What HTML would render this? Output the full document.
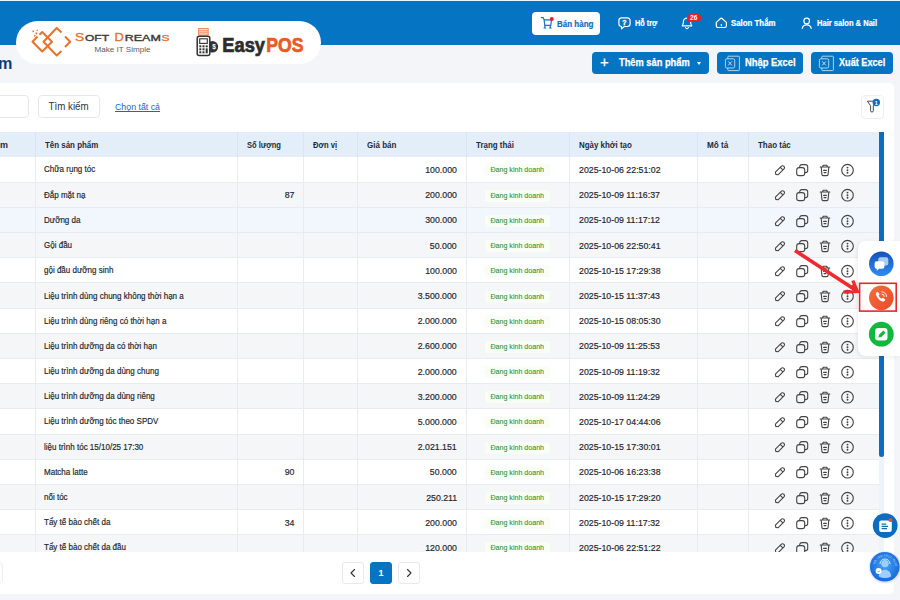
<!DOCTYPE html>
<html lang="vi"><head><meta charset="utf-8"><title>EasyPOS - Sản phẩm</title>
<style>
*{box-sizing:border-box;margin:0;padding:0}
html,body{width:900px;height:600px;overflow:hidden}
body{position:relative;background:#f3f5f8;font-family:"Liberation Sans",sans-serif;color:#2b2f36;font-size:9px}
.abs{position:absolute}
#topstrip{left:0;top:0;width:900px;height:2px;background:linear-gradient(#e6f8fd 0,#e6f8fd 1.2px,#2468ac 1.3px,#0574c3 2px)}
#hdr{left:0;top:2px;width:900px;height:43px;background:#0574c3;box-shadow:0 1px 0 #f9fbfd}
#logo{left:16px;top:21px;width:305px;height:43px;border-radius:22px;background:#fff}
#title{left:-2px;top:54px;font-size:16.200px;font-weight:bold;color:#0c3c74;letter-spacing:-0.2px}
.hbtn{color:#fff;font-weight:bold;font-size:8.6px;white-space:nowrap;-webkit-text-stroke:.2px #fff}
#banhang{-webkit-text-stroke:.2px #1a72c2;left:532.300px;top:12px;width:68px;height:22.600px;border-radius:4px;background:#fff;color:#0e6cc0}
.bbtn{top:52px;height:22px;border-radius:4px;background:#0574c3;color:#fff;font-weight:bold;font-size:10px;white-space:nowrap;-webkit-text-stroke:.25px #fff}
#panel{left:-6px;top:83px;width:900px;height:511px;background:#fff;border-radius:5px}
#inp{left:-6px;top:95px;width:35px;height:23px;border:1px solid #e4e8ee;border-radius:4px;background:#fff}
#search{left:38px;top:95px;width:62px;height:23px;border:1px solid #e4e8ee;border-radius:4px;background:#fff;font-size:10px;color:#30343a;text-align:center;line-height:21px}
#chon{left:115px;top:102px;font-size:8.8px;color:#1769bd;text-decoration:underline;white-space:nowrap}
#filter{left:860.500px;top:95px;width:23.500px;height:23.500px;border:1px solid #eceef2;border-radius:4px;background:#fff}
#twrap{left:0;top:132px;width:879px;height:419.500px;overflow:hidden}
table{border-collapse:collapse;table-layout:fixed;width:879px}
th{height:25px;background:#e3eef8;color:#1d2b3c;font-weight:bold;font-size:9px;text-align:left;padding-left:9px;border-right:1px solid #d9e5f1;white-space:nowrap;overflow:hidden}
td{height:25.2px;border-right:1px solid #e8ebef;border-bottom:1px solid #e8ebef;font-size:9px;white-space:nowrap;overflow:hidden;padding:0;color:#22262c;-webkit-text-stroke:.18px #22262c}
td span{display:inline-block}
tr.r0 td{background:#fff}
tr.r1 td{background:#f5f6f7}
tr.hl td{background:#f2f7fd}
td.nm{padding-left:8.500px}
td.nm span{transform:scaleX(.89);transform-origin:0 50%}
td.num{text-align:right;padding-right:8.500px;font-size:9.400px}
td.num span{transform:scaleX(.935);transform-origin:100% 50%}
td.dt{padding-left:9.500px;font-size:9.400px}
td.dt span{transform:scaleX(.937);transform-origin:0 50%}
td.st{text-align:center}
td.st span{background:#f8fdf6;color:#2a963c;font-size:8px;width:65px;height:12px;line-height:12px;border-radius:2px;position:relative;top:1px;-webkit-text-stroke:.1px #2a963c}
td.st i{display:inline-block;font-style:normal;transform:scaleX(.885);transform-origin:50% 50%}
td.act{padding-left:25px;border-right:none}
svg.ic{display:block;position:relative;top:.6px}
#sbtrack{left:879px;top:132px;width:5px;height:419px;background:#edf3fa}
#sbthumb{left:879px;top:132px;width:5px;height:325px;background:#0e6cc0;border-radius:0 0 3px 3px}
#float{left:858px;top:241px;width:42px;height:115px;background:#fff;border-radius:8px 0 0 8px;box-shadow:-1px 1px 4px rgba(0,0,0,.08)}
.pg{top:562px;width:22px;height:22px;border:1px solid #e6e9ee;border-radius:3px;background:#fff}
#pg1{left:370px;background:#0574c3;border-color:#0574c3;color:#fff;font-weight:bold;font-size:9px;text-align:center;line-height:20px}
#botstrip{left:0;top:593.500px;width:900px;height:6px;background:#f3f5f8}
#pgsize{left:-7px;top:561.500px;width:10px;height:22.500px;border:1px solid #eceef2;border-radius:4px;background:#fff}
</style></head><body>
<div class="abs" id="topstrip"></div>
<div class="abs" id="hdr"></div>

<div class="abs" id="title">m</div>

<!-- top nav -->
<div class="abs hbtn" id="banhang"><span class="abs" style="left:24.500px;top:6.500px"><span style="display:inline-block;transform:scaleX(0.930);transform-origin:0 50%">Bán hàng</span></span>
<svg class="abs" style="left:8px;top:4px" width="16" height="14" viewBox="540 16 16 14"><g fill="none" stroke="#1a72c2" stroke-width="1.200" stroke-linecap="round" stroke-linejoin="round"><path d="M541.400 17.600h1.700l1 2.200h7.400l-.7 5.600h-6l-.7-5.600"/><path d="M544.900 25.600v2.300M550.300 25.600v2.300M544 28h1.800M549.400 28h1.800"/></g><circle cx="551.800" cy="19" r="2" fill="#e5202b"/></svg></div>

<svg class="abs" style="left:616px;top:15px" width="16" height="16" viewBox="616 15 16 16"><path d="M621.600 17.900h5.800a2.700 2.700 0 0 1 2.700 2.700v3.200a2.700 2.700 0 0 1-2.700 2.700h-3l-2.900 2.300v-2.300a2.700 2.700 0 0 1-2.600-2.700v-3.200a2.700 2.700 0 0 1 2.700-2.700z" fill="none" stroke="#fff" stroke-width="1.200" stroke-linejoin="round"/><text x="624.500" y="24.900" font-family="Liberation Sans,sans-serif" font-size="7" font-weight="bold" fill="#fff" stroke="#fff" stroke-width=".3" text-anchor="middle">?</text></svg>
<div class="abs hbtn" style="left:635px;top:18px"><span style="display:inline-block;transform:scaleX(0.852);transform-origin:0 50%">Hỗ trợ</span></div>

<svg class="abs" style="left:679px;top:14px" width="16" height="18" viewBox="0 0 16 18"><g fill="none" stroke="#fff" stroke-width="1.200" stroke-linecap="round" stroke-linejoin="round"><path d="M3.200 11.800c1-1 1.200-2.200 1.200-4a3.600 3.600 0 0 1 7.200 0c0 1.800.2 3 1.200 4z"/><path d="M6.600 13.600a1.500 1.500 0 0 0 2.800 0"/></g></svg>
<div class="abs" style="left:686.700px;top:14px;width:14px;height:8px;border-radius:4px;background:#e5202b;color:#fff;font-size:6.500px;font-weight:bold;text-align:center;line-height:8px">26</div>

<svg class="abs" style="left:714px;top:15px" width="16" height="16" viewBox="714 15 16 16"><g fill="none" stroke="#fff" stroke-width="1.200" stroke-linejoin="round" stroke-linecap="round"><path d="M716.300 22.400l4.300-3.900a1.100 1.100 0 0 1 1.500 0l4.300 3.900v3.400a1.700 1.700 0 0 1-1.700 1.700h-6.700a1.700 1.700 0 0 1-1.700-1.700z"/><path d="M721.350 24.600v1.100"/></g></svg>
<div class="abs hbtn" style="left:731px;top:18px"><span style="display:inline-block;transform:scaleX(0.913);transform-origin:0 50%">Salon Thắm</span></div>

<svg class="abs" style="left:798px;top:15px" width="16" height="16" viewBox="798 15 16 16"><g fill="none" stroke="#fff" stroke-width="1.200" stroke-linecap="round"><circle cx="806.700" cy="21" r="2.800"/><path d="M802.200 28.400c.5-2.400 2.200-3.500 4.500-3.500s4 1.100 4.500 3.500"/></g></svg>
<div class="abs hbtn" style="left:817px;top:18px"><span style="display:inline-block;transform:scaleX(0.879);transform-origin:0 50%">Hair salon &amp; Nail</span></div>

<!-- logo pill -->
<div class="abs" id="logo"></div>
<svg class="abs" style="left:16px;top:21px" width="305" height="43" viewBox="16 21 305 43">
<g fill="none" stroke="#e8722c" stroke-width="2" stroke-linejoin="round" stroke-linecap="butt">
<path d="M37.500 36.500L32.500 41.700 42.200 51.500 52 41.700 42.200 32 39.500 34.700"/>
<path d="M61.500 32.500L56.700 28 43.500 41.700 56.700 55.500 61.500 51"/>
<path d="M65 36.500L70.200 41.700 65 47"/>
</g>
<g fill="#e8722c"><rect x="32.500" y="30.500" width="1.600" height="1.600"/><rect x="35.500" y="32.500" width="1.800" height="1.800"/><rect x="36.500" y="29.800" width="1.300" height="1.300"/><rect x="34" y="35" width="1.500" height="1.500"/></g>
<g font-family="Liberation Sans,sans-serif" lengthAdjust="spacingAndGlyphs">
<text x="75" y="41" font-size="11.200" fill="#e8722c" stroke="#e8722c" stroke-width=".35" textLength="9.200" lengthAdjust="spacingAndGlyphs">S</text>
<text x="85" y="41" font-size="8.400" fill="#3a3a3a" stroke="#3a3a3a" stroke-width=".35" textLength="24" lengthAdjust="spacingAndGlyphs">OFT</text>
<text x="114.500" y="41" font-size="11.200" fill="#e8722c" stroke="#e8722c" stroke-width=".35" textLength="9.300" lengthAdjust="spacingAndGlyphs">D</text>
<text x="124.800" y="41" font-size="8.400" fill="#3a3a3a" stroke="#3a3a3a" stroke-width=".35" textLength="36" lengthAdjust="spacingAndGlyphs">REAM</text>
<text x="161.600" y="41" font-size="8.400" fill="#e8722c" stroke="#e8722c" stroke-width=".35" textLength="8" lengthAdjust="spacingAndGlyphs">S</text>
<text x="94.500" y="52.200" font-size="7.800" fill="#5a5a5a" textLength="56" lengthAdjust="spacingAndGlyphs">Make IT Simple</text>
<text x="222.300" y="51.500" font-size="20.300" font-weight="bold" fill="#2d2d2d" stroke="#2d2d2d" stroke-width=".7" textLength="42.700" lengthAdjust="spacingAndGlyphs">Easy</text>
<text x="266.300" y="51.500" font-size="20.300" font-weight="bold" fill="#ea5a24" stroke="#ea5a24" stroke-width=".7" textLength="37.200" lengthAdjust="spacingAndGlyphs">POS</text>
</g>
<!-- pos machine -->
<rect x="198.600" y="28.500" width="9.600" height="6.500" fill="#fbe3d6" stroke="#ee8a5c" stroke-width="1"/>
<path d="M198.600 30.800h9.600M198.600 32.800h9.600" stroke="#ee8a5c" stroke-width="1"/>
<circle cx="212.400" cy="46.800" r="5.800" fill="#333"/>
<text x="212.300" y="49.200" font-family="Liberation Sans,sans-serif" font-size="6.500" font-weight="bold" fill="#fff">$</text>
<rect x="197.200" y="36.300" width="12.600" height="19.200" rx="2" fill="#fff" stroke="#333" stroke-width="1.500"/>
<rect x="199.700" y="38.800" width="7.600" height="4.600" fill="#fff" stroke="#333" stroke-width="1.100"/>
<g fill="#333"><rect x="199.300" y="45.300" width="2" height="2"/><rect x="202.500" y="45.300" width="2" height="2"/><rect x="205.700" y="45.300" width="2" height="2"/><rect x="199.300" y="48.300" width="2" height="2"/><rect x="202.500" y="48.300" width="2" height="2"/><rect x="205.700" y="48.300" width="2" height="5"/><rect x="199.300" y="51.300" width="2" height="2"/><rect x="202.500" y="51.300" width="2" height="2"/></g>
</svg>

<!-- action buttons -->
<div class="abs bbtn" style="left:592px;width:117px"><span class="abs" style="left:8px;top:1px;font-size:15px;font-weight:normal">+</span><span class="abs" style="left:27.300px;top:5.200px"><span style="display:inline-block;transform:scaleX(0.929);transform-origin:0 50%">Thêm sản phẩm</span></span><span class="abs" style="left:105px;top:10px;width:0;height:0;border-left:2.500px solid transparent;border-right:2.500px solid transparent;border-top:3px solid #fff"></span></div>
<div class="abs bbtn" style="left:717px;width:86px"><svg class="abs" style="left:7px;top:3px" width="17" height="17" viewBox="7 3 17 17"><g fill="none" stroke="#c4def3" stroke-width=".9" stroke-linejoin="round"><rect x="10.800" y="4.200" width="11.600" height="14.400" rx=".8"/><rect x="8.400" y="6.800" width="9.300" height="9.200" rx="1.400" fill="#0574c3"/><path d="M11.200 9.400l3.700 4M14.900 9.400l-3.700 4" stroke-width="1"/></g></svg><span class="abs" style="left:28px;top:5.200px"><span style="display:inline-block;transform:scaleX(0.937);transform-origin:0 50%">Nhập Excel</span></span></div>
<div class="abs bbtn" style="left:811px;width:82px"><svg class="abs" style="left:7px;top:3px" width="17" height="17" viewBox="7 3 17 17"><g fill="none" stroke="#c4def3" stroke-width=".9" stroke-linejoin="round"><rect x="10.800" y="4.200" width="11.600" height="14.400" rx=".8"/><rect x="8.400" y="6.800" width="9.300" height="9.200" rx="1.400" fill="#0574c3"/><path d="M11.200 9.400l3.700 4M14.900 9.400l-3.700 4" stroke-width="1"/></g></svg><span class="abs" style="left:28.300px;top:5.200px"><span style="display:inline-block;transform:scaleX(0.913);transform-origin:0 50%">Xuất Excel</span></span></div>

<!-- panel -->
<div class="abs" id="panel"></div>
<div class="abs" id="inp"></div>
<div class="abs" id="search"><span style="display:inline-block;transform:scaleX(0.973);transform-origin:50% 50%">Tìm kiếm</span></div>
<div class="abs" id="chon">Chọn tất cả</div>
<div class="abs" id="filter"></div>
<svg class="abs" style="left:860px;top:94px" width="26" height="26" viewBox="860 94 26 26"><path d="M867.400 101.200L875.600 101.200 873.300 105.800 873.300 110.800Q873.300 112 872 112 870.600 112 870.600 110.800L870.600 105.800Z" fill="#fff" stroke="#4a4a4a" stroke-width="1" stroke-linejoin="round"/><circle cx="876.300" cy="102.500" r="3.700" fill="#0e6cc0"/><text x="876.300" y="104.500" font-family="Liberation Sans,sans-serif" font-size="5.500" font-weight="bold" fill="#fff" text-anchor="middle">1</text></svg>

<div class="abs" id="twrap"><table>
<colgroup><col style="width:35px"><col style="width:202px"><col style="width:66px"><col style="width:54px"><col style="width:109px"><col style="width:103px"><col style="width:128px"><col style="width:51px"><col style="width:131px"></colgroup>
<thead><tr><th style="padding-left:0;text-align:right;padding-right:28px">m</th><th><span style="display:inline-block;transform:scaleX(0.881);transform-origin:0 50%">Tên sản phẩm</span></th><th><span style="display:inline-block;transform:scaleX(0.839);transform-origin:0 50%">Số lượng</span></th><th><span style="display:inline-block;transform:scaleX(0.845);transform-origin:0 50%">Đơn vị</span></th><th><span style="display:inline-block;transform:scaleX(0.890);transform-origin:0 50%">Giá bán</span></th><th><span style="display:inline-block;transform:scaleX(0.883);transform-origin:0 50%">Trạng thái</span></th><th><span style="display:inline-block;transform:scaleX(0.881);transform-origin:0 50%">Ngày khởi tạo</span></th><th><span style="display:inline-block;transform:scaleX(0.906);transform-origin:0 50%">Mô tả</span></th><th style="border-right:none"><span style="display:inline-block;transform:scaleX(0.886);transform-origin:0 50%">Thao tác</span></th></tr></thead>
<tbody>
<tr class="r0"><td></td><td class="nm"><span>Chữa rụng tóc</span></td><td class="num"><span></span></td><td></td><td class="num"><span>100.000</span></td><td class="st"><span><i>Đang kinh doanh</i></span></td><td class="dt"><span>2025-10-06 22:51:02</span></td><td></td><td class="act"><svg class="ic" viewBox="0 0 80 14" width="80" height="14"><g fill="none" stroke="#444" stroke-width="1.1" stroke-linecap="round" stroke-linejoin="round"><path transform="translate(-0.8,0)" d="M2.6 11.4 L2.2 9.2 L8.2 3.2 a1.6 1.6 0 0 1 2.3 0 l0.3 0.3 a1.6 1.6 0 0 1 0 2.3 L4.8 11.8 Z M7.2 4.4 l2.4 2.4"/><rect transform="translate(0.7,0)" x="22" y="4.6" width="8" height="8" rx="2.4"/><path transform="translate(0.7,0)" d="M25 4.6 v-0.8 a2.2 2.2 0 0 1 2.2 -2.2 h3.6 a2.2 2.2 0 0 1 2.2 2.2 v3.6 a2.2 2.2 0 0 1 -2.2 2.2 h-0.8"/><path d="M46.2 4 h9.600 M48.600 3.800 l0.600 -1.600 h3.600 l0.600 1.600 M47.200 4.200 l0.700 7.200 a1.300 1.300 0 0 0 1.300 1.200 h3.600 a1.300 1.300 0 0 0 1.300 -1.200 l0.700 -7.200 M49.600 7.400 h2.800 M50 9.600 h2"/><circle cx="73.500" cy="7.200" r="5.800"/></g><g fill="#444"><circle cx="73.500" cy="4.600" r="0.950"/><circle cx="73.500" cy="7.200" r="0.950"/><circle cx="73.500" cy="9.800" r="0.950"/></g></svg></td></tr>
<tr class="r1"><td></td><td class="nm"><span>Đắp mặt nạ</span></td><td class="num"><span>87</span></td><td></td><td class="num"><span>200.000</span></td><td class="st"><span><i>Đang kinh doanh</i></span></td><td class="dt"><span>2025-10-09 11:16:37</span></td><td></td><td class="act"><svg class="ic" viewBox="0 0 80 14" width="80" height="14"><g fill="none" stroke="#444" stroke-width="1.1" stroke-linecap="round" stroke-linejoin="round"><path transform="translate(-0.8,0)" d="M2.6 11.4 L2.2 9.2 L8.2 3.2 a1.6 1.6 0 0 1 2.3 0 l0.3 0.3 a1.6 1.6 0 0 1 0 2.3 L4.8 11.8 Z M7.2 4.4 l2.4 2.4"/><rect transform="translate(0.7,0)" x="22" y="4.6" width="8" height="8" rx="2.4"/><path transform="translate(0.7,0)" d="M25 4.6 v-0.8 a2.2 2.2 0 0 1 2.2 -2.2 h3.6 a2.2 2.2 0 0 1 2.2 2.2 v3.6 a2.2 2.2 0 0 1 -2.2 2.2 h-0.8"/><path d="M46.2 4 h9.600 M48.600 3.800 l0.600 -1.600 h3.600 l0.600 1.600 M47.200 4.200 l0.700 7.200 a1.300 1.300 0 0 0 1.300 1.200 h3.600 a1.300 1.300 0 0 0 1.300 -1.200 l0.700 -7.200 M49.600 7.400 h2.800 M50 9.600 h2"/><circle cx="73.500" cy="7.200" r="5.800"/></g><g fill="#444"><circle cx="73.500" cy="4.600" r="0.950"/><circle cx="73.500" cy="7.200" r="0.950"/><circle cx="73.500" cy="9.800" r="0.950"/></g></svg></td></tr>
<tr class="r0 hl"><td></td><td class="nm"><span>Dưỡng da</span></td><td class="num"><span></span></td><td></td><td class="num"><span>300.000</span></td><td class="st"><span><i>Đang kinh doanh</i></span></td><td class="dt"><span>2025-10-09 11:17:12</span></td><td></td><td class="act"><svg class="ic" viewBox="0 0 80 14" width="80" height="14"><g fill="none" stroke="#444" stroke-width="1.1" stroke-linecap="round" stroke-linejoin="round"><path transform="translate(-0.8,0)" d="M2.6 11.4 L2.2 9.2 L8.2 3.2 a1.6 1.6 0 0 1 2.3 0 l0.3 0.3 a1.6 1.6 0 0 1 0 2.3 L4.8 11.8 Z M7.2 4.4 l2.4 2.4"/><rect transform="translate(0.7,0)" x="22" y="4.6" width="8" height="8" rx="2.4"/><path transform="translate(0.7,0)" d="M25 4.6 v-0.8 a2.2 2.2 0 0 1 2.2 -2.2 h3.6 a2.2 2.2 0 0 1 2.2 2.2 v3.6 a2.2 2.2 0 0 1 -2.2 2.2 h-0.8"/><path d="M46.2 4 h9.600 M48.600 3.800 l0.600 -1.600 h3.600 l0.600 1.600 M47.200 4.200 l0.700 7.200 a1.300 1.300 0 0 0 1.300 1.200 h3.600 a1.300 1.300 0 0 0 1.300 -1.200 l0.700 -7.200 M49.600 7.400 h2.800 M50 9.600 h2"/><circle cx="73.500" cy="7.200" r="5.800"/></g><g fill="#444"><circle cx="73.500" cy="4.600" r="0.950"/><circle cx="73.500" cy="7.200" r="0.950"/><circle cx="73.500" cy="9.800" r="0.950"/></g></svg></td></tr>
<tr class="r1"><td></td><td class="nm"><span>Gội đầu</span></td><td class="num"><span></span></td><td></td><td class="num"><span>50.000</span></td><td class="st"><span><i>Đang kinh doanh</i></span></td><td class="dt"><span>2025-10-06 22:50:41</span></td><td></td><td class="act"><svg class="ic" viewBox="0 0 80 14" width="80" height="14"><g fill="none" stroke="#444" stroke-width="1.1" stroke-linecap="round" stroke-linejoin="round"><path transform="translate(-0.8,0)" d="M2.6 11.4 L2.2 9.2 L8.2 3.2 a1.6 1.6 0 0 1 2.3 0 l0.3 0.3 a1.6 1.6 0 0 1 0 2.3 L4.8 11.8 Z M7.2 4.4 l2.4 2.4"/><rect transform="translate(0.7,0)" x="22" y="4.6" width="8" height="8" rx="2.4"/><path transform="translate(0.7,0)" d="M25 4.6 v-0.8 a2.2 2.2 0 0 1 2.2 -2.2 h3.6 a2.2 2.2 0 0 1 2.2 2.2 v3.6 a2.2 2.2 0 0 1 -2.2 2.2 h-0.8"/><path d="M46.2 4 h9.600 M48.600 3.800 l0.600 -1.600 h3.600 l0.600 1.600 M47.200 4.200 l0.700 7.200 a1.300 1.300 0 0 0 1.300 1.200 h3.600 a1.300 1.300 0 0 0 1.300 -1.200 l0.700 -7.200 M49.600 7.400 h2.800 M50 9.600 h2"/><circle cx="73.500" cy="7.200" r="5.800"/></g><g fill="#444"><circle cx="73.500" cy="4.600" r="0.950"/><circle cx="73.500" cy="7.200" r="0.950"/><circle cx="73.500" cy="9.800" r="0.950"/></g></svg></td></tr>
<tr class="r0"><td></td><td class="nm"><span>gội đầu dưỡng sinh</span></td><td class="num"><span></span></td><td></td><td class="num"><span>100.000</span></td><td class="st"><span><i>Đang kinh doanh</i></span></td><td class="dt"><span>2025-10-15 17:29:38</span></td><td></td><td class="act"><svg class="ic" viewBox="0 0 80 14" width="80" height="14"><g fill="none" stroke="#444" stroke-width="1.1" stroke-linecap="round" stroke-linejoin="round"><path transform="translate(-0.8,0)" d="M2.6 11.4 L2.2 9.2 L8.2 3.2 a1.6 1.6 0 0 1 2.3 0 l0.3 0.3 a1.6 1.6 0 0 1 0 2.3 L4.8 11.8 Z M7.2 4.4 l2.4 2.4"/><rect transform="translate(0.7,0)" x="22" y="4.6" width="8" height="8" rx="2.4"/><path transform="translate(0.7,0)" d="M25 4.6 v-0.8 a2.2 2.2 0 0 1 2.2 -2.2 h3.6 a2.2 2.2 0 0 1 2.2 2.2 v3.6 a2.2 2.2 0 0 1 -2.2 2.2 h-0.8"/><path d="M46.2 4 h9.600 M48.600 3.800 l0.600 -1.600 h3.600 l0.600 1.600 M47.200 4.200 l0.700 7.200 a1.300 1.300 0 0 0 1.300 1.200 h3.600 a1.300 1.300 0 0 0 1.300 -1.200 l0.700 -7.200 M49.600 7.400 h2.800 M50 9.600 h2"/><circle cx="73.500" cy="7.200" r="5.800"/></g><g fill="#444"><circle cx="73.500" cy="4.600" r="0.950"/><circle cx="73.500" cy="7.200" r="0.950"/><circle cx="73.500" cy="9.800" r="0.950"/></g></svg></td></tr>
<tr class="r1"><td></td><td class="nm"><span>Liệu trình dùng chung không thời hạn a</span></td><td class="num"><span></span></td><td></td><td class="num"><span>3.500.000</span></td><td class="st"><span><i>Đang kinh doanh</i></span></td><td class="dt"><span>2025-10-15 11:37:43</span></td><td></td><td class="act"><svg class="ic" viewBox="0 0 80 14" width="80" height="14"><g fill="none" stroke="#444" stroke-width="1.1" stroke-linecap="round" stroke-linejoin="round"><path transform="translate(-0.8,0)" d="M2.6 11.4 L2.2 9.2 L8.2 3.2 a1.6 1.6 0 0 1 2.3 0 l0.3 0.3 a1.6 1.6 0 0 1 0 2.3 L4.8 11.8 Z M7.2 4.4 l2.4 2.4"/><rect transform="translate(0.7,0)" x="22" y="4.6" width="8" height="8" rx="2.4"/><path transform="translate(0.7,0)" d="M25 4.6 v-0.8 a2.2 2.2 0 0 1 2.2 -2.2 h3.6 a2.2 2.2 0 0 1 2.2 2.2 v3.6 a2.2 2.2 0 0 1 -2.2 2.2 h-0.8"/><path d="M46.2 4 h9.600 M48.600 3.800 l0.600 -1.600 h3.600 l0.600 1.600 M47.200 4.200 l0.700 7.200 a1.300 1.300 0 0 0 1.300 1.200 h3.600 a1.300 1.300 0 0 0 1.300 -1.200 l0.700 -7.200 M49.600 7.400 h2.800 M50 9.600 h2"/><circle cx="73.500" cy="7.200" r="5.800"/></g><g fill="#444"><circle cx="73.500" cy="4.600" r="0.950"/><circle cx="73.500" cy="7.200" r="0.950"/><circle cx="73.500" cy="9.800" r="0.950"/></g></svg></td></tr>
<tr class="r0"><td></td><td class="nm"><span>Liệu trình dùng riêng có thời hạn a</span></td><td class="num"><span></span></td><td></td><td class="num"><span>2.000.000</span></td><td class="st"><span><i>Đang kinh doanh</i></span></td><td class="dt"><span>2025-10-15 08:05:30</span></td><td></td><td class="act"><svg class="ic" viewBox="0 0 80 14" width="80" height="14"><g fill="none" stroke="#444" stroke-width="1.1" stroke-linecap="round" stroke-linejoin="round"><path transform="translate(-0.8,0)" d="M2.6 11.4 L2.2 9.2 L8.2 3.2 a1.6 1.6 0 0 1 2.3 0 l0.3 0.3 a1.6 1.6 0 0 1 0 2.3 L4.8 11.8 Z M7.2 4.4 l2.4 2.4"/><rect transform="translate(0.7,0)" x="22" y="4.6" width="8" height="8" rx="2.4"/><path transform="translate(0.7,0)" d="M25 4.6 v-0.8 a2.2 2.2 0 0 1 2.2 -2.2 h3.6 a2.2 2.2 0 0 1 2.2 2.2 v3.6 a2.2 2.2 0 0 1 -2.2 2.2 h-0.8"/><path d="M46.2 4 h9.600 M48.600 3.800 l0.600 -1.600 h3.600 l0.600 1.600 M47.200 4.200 l0.700 7.200 a1.300 1.300 0 0 0 1.300 1.200 h3.600 a1.300 1.300 0 0 0 1.300 -1.200 l0.700 -7.200 M49.600 7.400 h2.800 M50 9.600 h2"/><circle cx="73.500" cy="7.200" r="5.800"/></g><g fill="#444"><circle cx="73.500" cy="4.600" r="0.950"/><circle cx="73.500" cy="7.200" r="0.950"/><circle cx="73.500" cy="9.800" r="0.950"/></g></svg></td></tr>
<tr class="r1"><td></td><td class="nm"><span>Liệu trình dưỡng da có thời hạn</span></td><td class="num"><span></span></td><td></td><td class="num"><span>2.600.000</span></td><td class="st"><span><i>Đang kinh doanh</i></span></td><td class="dt"><span>2025-10-09 11:25:53</span></td><td></td><td class="act"><svg class="ic" viewBox="0 0 80 14" width="80" height="14"><g fill="none" stroke="#444" stroke-width="1.1" stroke-linecap="round" stroke-linejoin="round"><path transform="translate(-0.8,0)" d="M2.6 11.4 L2.2 9.2 L8.2 3.2 a1.6 1.6 0 0 1 2.3 0 l0.3 0.3 a1.6 1.6 0 0 1 0 2.3 L4.8 11.8 Z M7.2 4.4 l2.4 2.4"/><rect transform="translate(0.7,0)" x="22" y="4.6" width="8" height="8" rx="2.4"/><path transform="translate(0.7,0)" d="M25 4.6 v-0.8 a2.2 2.2 0 0 1 2.2 -2.2 h3.6 a2.2 2.2 0 0 1 2.2 2.2 v3.6 a2.2 2.2 0 0 1 -2.2 2.2 h-0.8"/><path d="M46.2 4 h9.600 M48.600 3.800 l0.600 -1.600 h3.600 l0.600 1.600 M47.200 4.200 l0.700 7.200 a1.300 1.300 0 0 0 1.300 1.200 h3.600 a1.300 1.300 0 0 0 1.300 -1.200 l0.700 -7.200 M49.600 7.400 h2.800 M50 9.600 h2"/><circle cx="73.500" cy="7.200" r="5.800"/></g><g fill="#444"><circle cx="73.500" cy="4.600" r="0.950"/><circle cx="73.500" cy="7.200" r="0.950"/><circle cx="73.500" cy="9.800" r="0.950"/></g></svg></td></tr>
<tr class="r0"><td></td><td class="nm"><span>Liệu trình dưỡng da dùng chung</span></td><td class="num"><span></span></td><td></td><td class="num"><span>2.000.000</span></td><td class="st"><span><i>Đang kinh doanh</i></span></td><td class="dt"><span>2025-10-09 11:19:32</span></td><td></td><td class="act"><svg class="ic" viewBox="0 0 80 14" width="80" height="14"><g fill="none" stroke="#444" stroke-width="1.1" stroke-linecap="round" stroke-linejoin="round"><path transform="translate(-0.8,0)" d="M2.6 11.4 L2.2 9.2 L8.2 3.2 a1.6 1.6 0 0 1 2.3 0 l0.3 0.3 a1.6 1.6 0 0 1 0 2.3 L4.8 11.8 Z M7.2 4.4 l2.4 2.4"/><rect transform="translate(0.7,0)" x="22" y="4.6" width="8" height="8" rx="2.4"/><path transform="translate(0.7,0)" d="M25 4.6 v-0.8 a2.2 2.2 0 0 1 2.2 -2.2 h3.6 a2.2 2.2 0 0 1 2.2 2.2 v3.6 a2.2 2.2 0 0 1 -2.2 2.2 h-0.8"/><path d="M46.2 4 h9.600 M48.600 3.800 l0.600 -1.600 h3.600 l0.600 1.600 M47.200 4.200 l0.700 7.200 a1.300 1.300 0 0 0 1.300 1.200 h3.600 a1.300 1.300 0 0 0 1.300 -1.200 l0.700 -7.200 M49.600 7.400 h2.800 M50 9.600 h2"/><circle cx="73.500" cy="7.200" r="5.800"/></g><g fill="#444"><circle cx="73.500" cy="4.600" r="0.950"/><circle cx="73.500" cy="7.200" r="0.950"/><circle cx="73.500" cy="9.800" r="0.950"/></g></svg></td></tr>
<tr class="r1"><td></td><td class="nm"><span>Liệu trình dưỡng da dùng riêng</span></td><td class="num"><span></span></td><td></td><td class="num"><span>3.200.000</span></td><td class="st"><span><i>Đang kinh doanh</i></span></td><td class="dt"><span>2025-10-09 11:24:29</span></td><td></td><td class="act"><svg class="ic" viewBox="0 0 80 14" width="80" height="14"><g fill="none" stroke="#444" stroke-width="1.1" stroke-linecap="round" stroke-linejoin="round"><path transform="translate(-0.8,0)" d="M2.6 11.4 L2.2 9.2 L8.2 3.2 a1.6 1.6 0 0 1 2.3 0 l0.3 0.3 a1.6 1.6 0 0 1 0 2.3 L4.8 11.8 Z M7.2 4.4 l2.4 2.4"/><rect transform="translate(0.7,0)" x="22" y="4.6" width="8" height="8" rx="2.4"/><path transform="translate(0.7,0)" d="M25 4.6 v-0.8 a2.2 2.2 0 0 1 2.2 -2.2 h3.6 a2.2 2.2 0 0 1 2.2 2.2 v3.6 a2.2 2.2 0 0 1 -2.2 2.2 h-0.8"/><path d="M46.2 4 h9.600 M48.600 3.800 l0.600 -1.600 h3.600 l0.600 1.600 M47.200 4.200 l0.700 7.200 a1.300 1.300 0 0 0 1.300 1.200 h3.600 a1.300 1.300 0 0 0 1.300 -1.200 l0.700 -7.200 M49.600 7.400 h2.800 M50 9.600 h2"/><circle cx="73.500" cy="7.200" r="5.800"/></g><g fill="#444"><circle cx="73.500" cy="4.600" r="0.950"/><circle cx="73.500" cy="7.200" r="0.950"/><circle cx="73.500" cy="9.800" r="0.950"/></g></svg></td></tr>
<tr class="r0"><td></td><td class="nm"><span>Liệu trình dưỡng tóc theo SPDV</span></td><td class="num"><span></span></td><td></td><td class="num"><span>5.000.000</span></td><td class="st"><span><i>Đang kinh doanh</i></span></td><td class="dt"><span>2025-10-17 04:44:06</span></td><td></td><td class="act"><svg class="ic" viewBox="0 0 80 14" width="80" height="14"><g fill="none" stroke="#444" stroke-width="1.1" stroke-linecap="round" stroke-linejoin="round"><path transform="translate(-0.8,0)" d="M2.6 11.4 L2.2 9.2 L8.2 3.2 a1.6 1.6 0 0 1 2.3 0 l0.3 0.3 a1.6 1.6 0 0 1 0 2.3 L4.8 11.8 Z M7.2 4.4 l2.4 2.4"/><rect transform="translate(0.7,0)" x="22" y="4.6" width="8" height="8" rx="2.4"/><path transform="translate(0.7,0)" d="M25 4.6 v-0.8 a2.2 2.2 0 0 1 2.2 -2.2 h3.6 a2.2 2.2 0 0 1 2.2 2.2 v3.6 a2.2 2.2 0 0 1 -2.2 2.2 h-0.8"/><path d="M46.2 4 h9.600 M48.600 3.800 l0.600 -1.600 h3.600 l0.600 1.600 M47.200 4.200 l0.700 7.200 a1.300 1.300 0 0 0 1.300 1.200 h3.600 a1.300 1.300 0 0 0 1.300 -1.200 l0.700 -7.200 M49.600 7.400 h2.800 M50 9.600 h2"/><circle cx="73.500" cy="7.200" r="5.800"/></g><g fill="#444"><circle cx="73.500" cy="4.600" r="0.950"/><circle cx="73.500" cy="7.200" r="0.950"/><circle cx="73.500" cy="9.800" r="0.950"/></g></svg></td></tr>
<tr class="r1"><td></td><td class="nm"><span>liệu trình tóc 15/10/25 17:30</span></td><td class="num"><span></span></td><td></td><td class="num"><span>2.021.151</span></td><td class="st"><span><i>Đang kinh doanh</i></span></td><td class="dt"><span>2025-10-15 17:30:01</span></td><td></td><td class="act"><svg class="ic" viewBox="0 0 80 14" width="80" height="14"><g fill="none" stroke="#444" stroke-width="1.1" stroke-linecap="round" stroke-linejoin="round"><path transform="translate(-0.8,0)" d="M2.6 11.4 L2.2 9.2 L8.2 3.2 a1.6 1.6 0 0 1 2.3 0 l0.3 0.3 a1.6 1.6 0 0 1 0 2.3 L4.8 11.8 Z M7.2 4.4 l2.4 2.4"/><rect transform="translate(0.7,0)" x="22" y="4.6" width="8" height="8" rx="2.4"/><path transform="translate(0.7,0)" d="M25 4.6 v-0.8 a2.2 2.2 0 0 1 2.2 -2.2 h3.6 a2.2 2.2 0 0 1 2.2 2.2 v3.6 a2.2 2.2 0 0 1 -2.2 2.2 h-0.8"/><path d="M46.2 4 h9.600 M48.600 3.800 l0.600 -1.600 h3.600 l0.600 1.600 M47.200 4.200 l0.700 7.200 a1.300 1.300 0 0 0 1.300 1.200 h3.600 a1.300 1.300 0 0 0 1.300 -1.200 l0.700 -7.200 M49.600 7.400 h2.800 M50 9.600 h2"/><circle cx="73.500" cy="7.200" r="5.800"/></g><g fill="#444"><circle cx="73.500" cy="4.600" r="0.950"/><circle cx="73.500" cy="7.200" r="0.950"/><circle cx="73.500" cy="9.800" r="0.950"/></g></svg></td></tr>
<tr class="r0"><td></td><td class="nm"><span>Matcha latte</span></td><td class="num"><span>90</span></td><td></td><td class="num"><span>50.000</span></td><td class="st"><span><i>Đang kinh doanh</i></span></td><td class="dt"><span>2025-10-06 16:23:38</span></td><td></td><td class="act"><svg class="ic" viewBox="0 0 80 14" width="80" height="14"><g fill="none" stroke="#444" stroke-width="1.1" stroke-linecap="round" stroke-linejoin="round"><path transform="translate(-0.8,0)" d="M2.6 11.4 L2.2 9.2 L8.2 3.2 a1.6 1.6 0 0 1 2.3 0 l0.3 0.3 a1.6 1.6 0 0 1 0 2.3 L4.8 11.8 Z M7.2 4.4 l2.4 2.4"/><rect transform="translate(0.7,0)" x="22" y="4.6" width="8" height="8" rx="2.4"/><path transform="translate(0.7,0)" d="M25 4.6 v-0.8 a2.2 2.2 0 0 1 2.2 -2.2 h3.6 a2.2 2.2 0 0 1 2.2 2.2 v3.6 a2.2 2.2 0 0 1 -2.2 2.2 h-0.8"/><path d="M46.2 4 h9.600 M48.600 3.800 l0.600 -1.600 h3.600 l0.600 1.600 M47.200 4.200 l0.700 7.200 a1.300 1.300 0 0 0 1.300 1.200 h3.600 a1.300 1.300 0 0 0 1.300 -1.200 l0.700 -7.200 M49.600 7.400 h2.800 M50 9.600 h2"/><circle cx="73.500" cy="7.200" r="5.800"/></g><g fill="#444"><circle cx="73.500" cy="4.600" r="0.950"/><circle cx="73.500" cy="7.200" r="0.950"/><circle cx="73.500" cy="9.800" r="0.950"/></g></svg></td></tr>
<tr class="r1"><td></td><td class="nm"><span>nối tóc</span></td><td class="num"><span></span></td><td></td><td class="num"><span>250.211</span></td><td class="st"><span><i>Đang kinh doanh</i></span></td><td class="dt"><span>2025-10-15 17:29:20</span></td><td></td><td class="act"><svg class="ic" viewBox="0 0 80 14" width="80" height="14"><g fill="none" stroke="#444" stroke-width="1.1" stroke-linecap="round" stroke-linejoin="round"><path transform="translate(-0.8,0)" d="M2.6 11.4 L2.2 9.2 L8.2 3.2 a1.6 1.6 0 0 1 2.3 0 l0.3 0.3 a1.6 1.6 0 0 1 0 2.3 L4.8 11.8 Z M7.2 4.4 l2.4 2.4"/><rect transform="translate(0.7,0)" x="22" y="4.6" width="8" height="8" rx="2.4"/><path transform="translate(0.7,0)" d="M25 4.6 v-0.8 a2.2 2.2 0 0 1 2.2 -2.2 h3.6 a2.2 2.2 0 0 1 2.2 2.2 v3.6 a2.2 2.2 0 0 1 -2.2 2.2 h-0.8"/><path d="M46.2 4 h9.600 M48.600 3.800 l0.600 -1.600 h3.600 l0.600 1.600 M47.200 4.200 l0.700 7.200 a1.300 1.300 0 0 0 1.300 1.200 h3.600 a1.300 1.300 0 0 0 1.300 -1.200 l0.700 -7.200 M49.600 7.400 h2.800 M50 9.600 h2"/><circle cx="73.500" cy="7.200" r="5.800"/></g><g fill="#444"><circle cx="73.500" cy="4.600" r="0.950"/><circle cx="73.500" cy="7.200" r="0.950"/><circle cx="73.500" cy="9.800" r="0.950"/></g></svg></td></tr>
<tr class="r0"><td></td><td class="nm"><span>Tẩy tế bào chết da</span></td><td class="num"><span>34</span></td><td></td><td class="num"><span>200.000</span></td><td class="st"><span><i>Đang kinh doanh</i></span></td><td class="dt"><span>2025-10-09 11:17:32</span></td><td></td><td class="act"><svg class="ic" viewBox="0 0 80 14" width="80" height="14"><g fill="none" stroke="#444" stroke-width="1.1" stroke-linecap="round" stroke-linejoin="round"><path transform="translate(-0.8,0)" d="M2.6 11.4 L2.2 9.2 L8.2 3.2 a1.6 1.6 0 0 1 2.3 0 l0.3 0.3 a1.6 1.6 0 0 1 0 2.3 L4.8 11.8 Z M7.2 4.4 l2.4 2.4"/><rect transform="translate(0.7,0)" x="22" y="4.6" width="8" height="8" rx="2.4"/><path transform="translate(0.7,0)" d="M25 4.6 v-0.8 a2.2 2.2 0 0 1 2.2 -2.2 h3.6 a2.2 2.2 0 0 1 2.2 2.2 v3.6 a2.2 2.2 0 0 1 -2.2 2.2 h-0.8"/><path d="M46.2 4 h9.600 M48.600 3.800 l0.600 -1.600 h3.600 l0.600 1.600 M47.200 4.200 l0.700 7.200 a1.300 1.300 0 0 0 1.300 1.200 h3.600 a1.300 1.300 0 0 0 1.300 -1.200 l0.700 -7.200 M49.600 7.400 h2.800 M50 9.600 h2"/><circle cx="73.500" cy="7.200" r="5.800"/></g><g fill="#444"><circle cx="73.500" cy="4.600" r="0.950"/><circle cx="73.500" cy="7.200" r="0.950"/><circle cx="73.500" cy="9.800" r="0.950"/></g></svg></td></tr>
<tr class="r1"><td></td><td class="nm"><span>Tẩy tế bào chết da đầu</span></td><td class="num"><span></span></td><td></td><td class="num"><span>120.000</span></td><td class="st"><span><i>Đang kinh doanh</i></span></td><td class="dt"><span>2025-10-06 22:51:22</span></td><td></td><td class="act"><svg class="ic" viewBox="0 0 80 14" width="80" height="14"><g fill="none" stroke="#444" stroke-width="1.1" stroke-linecap="round" stroke-linejoin="round"><path transform="translate(-0.8,0)" d="M2.6 11.4 L2.2 9.2 L8.2 3.2 a1.6 1.6 0 0 1 2.3 0 l0.3 0.3 a1.6 1.6 0 0 1 0 2.3 L4.8 11.8 Z M7.2 4.4 l2.4 2.4"/><rect transform="translate(0.7,0)" x="22" y="4.6" width="8" height="8" rx="2.4"/><path transform="translate(0.7,0)" d="M25 4.6 v-0.8 a2.2 2.2 0 0 1 2.2 -2.2 h3.6 a2.2 2.2 0 0 1 2.2 2.2 v3.6 a2.2 2.2 0 0 1 -2.2 2.2 h-0.8"/><path d="M46.2 4 h9.600 M48.600 3.800 l0.600 -1.600 h3.600 l0.600 1.600 M47.200 4.200 l0.700 7.200 a1.300 1.300 0 0 0 1.300 1.200 h3.600 a1.300 1.300 0 0 0 1.300 -1.200 l0.700 -7.200 M49.600 7.400 h2.800 M50 9.600 h2"/><circle cx="73.500" cy="7.200" r="5.800"/></g><g fill="#444"><circle cx="73.500" cy="4.600" r="0.950"/><circle cx="73.500" cy="7.200" r="0.950"/><circle cx="73.500" cy="9.800" r="0.950"/></g></svg></td></tr>
</tbody></table></div>
<div class="abs" id="sbtrack"></div>
<div class="abs" id="sbthumb"></div>

<!-- pagination -->
<div class="abs" id="pgsize"></div>
<div class="abs pg" style="left:342px"><svg class="abs" style="left:6px;top:5px" width="8" height="10" viewBox="0 0 8 10"><path d="M5.500 1.500L2 5l3.500 3.500" fill="none" stroke="#333" stroke-width="1.100" stroke-linecap="round" stroke-linejoin="round"/></svg></div>
<div class="abs pg" id="pg1">1</div>
<div class="abs pg" style="left:398px"><svg class="abs" style="left:6px;top:5px" width="8" height="10" viewBox="0 0 8 10"><path d="M2.500 1.500L6 5 2.500 8.500" fill="none" stroke="#333" stroke-width="1.100" stroke-linecap="round" stroke-linejoin="round"/></svg></div>
<div class="abs" id="botstrip"></div>

<!-- floating contact -->
<div class="abs" id="float"></div>
<svg class="abs" style="left:780px;top:236px" width="120" height="130" viewBox="780 236 120 130">
<defs><linearGradient id="gb" x1="0" y1="0" x2="0" y2="1"><stop offset="0" stop-color="#1450b8"/><stop offset="1" stop-color="#2f8df0"/></linearGradient>
<linearGradient id="go" x1="0" y1="0" x2="1" y2="1"><stop offset="0" stop-color="#f4703a"/><stop offset="1" stop-color="#ee472c"/></linearGradient></defs>
<circle cx="881.300" cy="263.800" r="12.300" fill="url(#gb)"/>
<path d="M880.300 257.300h6a2 2 0 0 1 2 2v4.200a2 2 0 0 1-2 2h-6a2 2 0 0 1-2-2v-4.200a2 2 0 0 1 2-2z" fill="#cfe3fb" opacity=".8"/>
<path d="M876.600 261.200h5.800a2 2 0 0 1 2 2v3.600a2 2 0 0 1-2 2h-3.400l-2.200 1.900v-1.900h-.2a2 2 0 0 1-2-2v-3.600a2 2 0 0 1 2-2z" fill="#fff"/>
<circle cx="881.300" cy="297.800" r="12.300" fill="url(#go)"/>
<path d="M876.300 292.600c-.8.800-.6 3.100 1.800 5.800s5 3.700 6 2.900l.9-.9c.3-.3.300-.8 0-1.100l-1.700-1.400c-.3-.3-.8-.2-1.100.1l-.7.700c-.9-.4-2.400-1.900-2.900-2.900l.7-.7c.3-.3.400-.8.100-1.100l-1.300-1.700c-.3-.4-.8-.4-1.100-.1z" fill="#fff"/>
<path d="M882 291.800a4.600 4.600 0 0 1 4.600 4.600M882 294.100a2.300 2.300 0 0 1 2.300 2.300" fill="none" stroke="#fff" stroke-width=".9" stroke-linecap="round"/>
<circle cx="881.300" cy="334.200" r="12.400" fill="#10b83e"/>
<rect x="875.100" y="328" width="12.400" height="12.400" rx="3.200" fill="#fff"/>
<path d="M878.400 337.600l.6-2.900 4.300-4.300 2.300 2.300-4.300 4.300z" fill="#10b83e"/>
<rect x="859.600" y="283.300" width="36.600" height="27.800" fill="none" stroke="#e8262f" stroke-width="1.600"/>
<path d="M795 250.600L855.500 290" stroke="#ee2a30" stroke-width="3.600" fill="none"/>
<path d="M852.800 280.500L857.500 291.600 843.500 292.200" stroke="#ee2a30" stroke-width="3.200" fill="none" stroke-linejoin="miter"/><path d="M856.500 290.500L850 288.500 853 284z" fill="#ee2a30"/>
</svg>

<!-- bottom-right bubbles -->
<svg class="abs" style="left:860px;top:505px" width="40" height="85" viewBox="860 505 40 85">
<defs><radialGradient id="gh" cx=".5" cy=".45" r=".6"><stop offset="0" stop-color="#4aa3f5"/><stop offset="1" stop-color="#0f62d8"/></radialGradient></defs>
<circle cx="885.200" cy="525.600" r="12.400" fill="#0e6cc0"/>
<rect x="879.200" y="520.400" width="12.600" height="11.600" rx="2.200" fill="#fff"/>
<path d="M881.600 524.200h4.600M881.600 526.400h6.400M881.600 528.600h5.400" stroke="#0e6cc0" stroke-width="1.200"/>
<circle cx="890.400" cy="520.200" r="1.900" fill="#f0552a"/>
<circle cx="884.800" cy="567.200" r="16.200" fill="#1a6fe0" opacity=".13"/>
<circle cx="884.800" cy="566.700" r="14.800" fill="url(#gh)"/>
<path id="arc" d="M874.500 566.700a10.300 10.300 0 0 1 20.600 0" fill="none"/>
<text font-family="Liberation Sans,sans-serif" font-size="2.600" fill="#cfe6ff" letter-spacing=".2"><textPath href="#arc" startOffset="8%">HỖ TRỢ TRỰC TUYẾN 24/7</textPath></text>
<circle cx="885" cy="563.600" r="3.700" fill="#9ccffb"/>
<path d="M878.800 576.400c.4-4.300 2.800-6.600 6.200-6.600s5.800 2.300 6.200 6.600a13 13 0 0 1-12.400 0z" fill="#9ccffb"/>
<path d="M880 564a5 5 0 0 1 10 0" fill="none" stroke="#cfe6ff" stroke-width="1"/>
<circle cx="878.600" cy="571" r="3" fill="#fff"/>
<path d="M877.300 571.200q1.300 1.200 2.600 0" fill="none" stroke="#1a6fe0" stroke-width=".6"/>
</svg>
</body></html>
